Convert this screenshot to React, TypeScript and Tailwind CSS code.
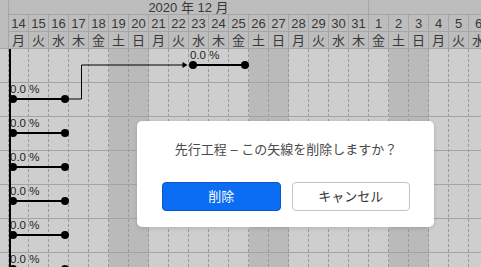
import React from 'react';

const font = { fontFamily: '"Liberation Sans", "Noto Sans CJK JP", sans-serif' };

const dec = [14, 15, 16, 17, 18, 19, 20, 21, 22, 23, 24, 25, 26, 27, 28, 29, 30, 31];
const jan = [1, 2, 3, 4, 5, 6];
const wd = ['月', '火', '水', '木', '金', '土', '日'];

// every visible day in order, with its weekday (Dec 14 2020 = Monday)
const days = [...dec.map((d) => ({ d, m: 12 })), ...jan.map((d) => ({ d, m: 1 }))].map((x, i) => ({
  ...x,
  w: wd[i % 7],
  weekend: i % 7 === 5 || i % 7 === 6,
}));

const COL = 20;
const ORIGIN = 8;

const tasks = [
  { start: 9, len: 3 },
  { start: 0, len: 3 },
  { start: 0, len: 3 },
  { start: 0, len: 3 },
  { start: 0, len: 3 },
  { start: 0, len: 3 },
  { start: 0, len: 3 },
];

const DayCells = ({ list }: { list: typeof days }) => (
  <>
    <div className="flex">
      {list.map((x) => (
        <div
          key={`n${x.m}-${x.d}`}
          className="w-[20px] h-[17px] shrink-0 border-r border-b border-[#a6a6a6] flex items-center justify-center text-[13px] leading-none text-[#383838]"
        >
          {x.d}
        </div>
      ))}
    </div>
    <div className="flex">
      {list.map((x) => (
        <div
          key={`w${x.m}-${x.d}`}
          className="w-[20px] h-[17px] shrink-0 border-r border-b border-[#a6a6a6] flex items-center justify-center text-[13px] leading-none text-[#383838]"
        >
          {x.w}
        </div>
      ))}
    </div>
  </>
);

const Bar = ({ start, len }: { start: number; len: number }) => {
  const x0 = ORIGIN + start * COL;
  const x1 = ORIGIN + (start + len) * COL;
  const a = x0 + 5;
  const b = x1 - 3;
  return (
    <>
      <span className="absolute top-0 text-[11.5px] leading-[13px] text-[#1e1e1e]" style={{ left: x0 + 2 }}>
        0.0 %
      </span>
      <div className="absolute top-[15px] h-[2px] bg-black" style={{ left: a, width: b - a }} />
      <div className="absolute top-[12px] w-[8px] h-[8px] rounded-full bg-black" style={{ left: a - 4 }} />
      <div className="absolute top-[12px] w-[8px] h-[8px] rounded-full bg-black" style={{ left: b - 4 }} />
    </>
  );
};

export default function App() {
  return (
    <div className="relative w-[481px] h-[267px] overflow-hidden bg-[#cecece]" style={font}>
      {/* timeline header */}
      <div className="flex h-[49px] bg-[#bdbdbd]">
        <div className="w-[9px] h-[49px] shrink-0 border-r border-b border-[#a6a6a6]" />
        <div className="flex flex-col w-[360px] shrink-0">
          <div className="h-[15px] border-r border-b border-[#a6a6a6] flex items-center justify-center text-[13px] leading-none text-[#383838]">
            2020 年 12 月
          </div>
          <DayCells list={days.filter((x) => x.m === 12)} />
        </div>
        <div className="flex flex-col w-[120px] shrink-0">
          <div className="h-[15px] border-b border-[#a6a6a6]" />
          <DayCells list={days.filter((x) => x.m === 1)} />
        </div>
      </div>

      {/* chart body */}
      <div className="relative h-[218px]">
        <div className="absolute inset-0 flex">
          <div className="w-[9px] shrink-0 border-r border-dashed border-[#9a9a9a]" />
          {days.map((x) => (
            <div
              key={`c${x.m}-${x.d}`}
              className={`w-[20px] shrink-0 border-r border-dashed border-[#9a9a9a] ${x.weekend ? 'bg-[#bababa]' : 'bg-[#cecece]'}`}
            />
          ))}
        </div>

        <div className="relative">
          {tasks.map((t, i) => (
            <div key={i} className="relative h-[34px] border-b border-[#a3a3a3]">
              <Bar start={t.start} len={t.len} />
            </div>
          ))}
        </div>

        <div className="absolute left-[9px] top-0 bottom-0 w-[2px] bg-black" />

        <svg className="absolute inset-0" width="481" height="218" viewBox="0 0 481 218">
          <polyline points="65,50 81.5,50 81.5,16 184,16" fill="none" stroke="#000" strokeWidth="1" />
          <polygon points="182.5,13 187.5,16 182.5,19" fill="#000" />
        </svg>
      </div>

      {/* confirm dialog */}
      <div className="absolute left-[137px] top-[121px] w-[297px] h-[106px] bg-white rounded-[5px] shadow-[0_1px_4px_rgba(0,0,0,0.15)] flex flex-col px-[25px] pr-[24px]">
        <p className="mt-[19px] h-[20px] text-[13px] leading-[20px] text-[#4a4a4a] text-center whitespace-nowrap">
          先行工程 – この矢線を削除しますか？
        </p>
        <div className="mt-[22px] flex gap-[11px]">
          <button className="flex-1 h-[29px] rounded-[4px] bg-[#0b6cf4] border border-[#0a58c6] text-white text-[13px]">
            削除
          </button>
          <button className="flex-1 h-[29px] rounded-[4px] bg-white border border-[#c4c4c4] text-[#333] text-[13px]">
            キャンセル
          </button>
        </div>
      </div>
    </div>
  );
}
